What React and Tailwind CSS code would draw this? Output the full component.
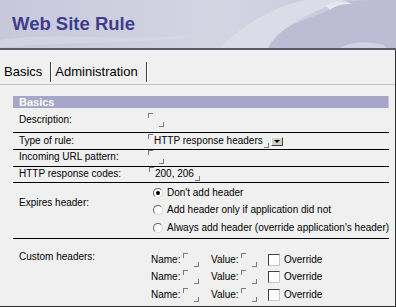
import React from 'react';

const TL = () => <span className="block w-[5px] h-[5px] border-l border-t border-[#7a7a7a] self-start" />;
const BR = () => <span className="block w-[5px] h-[5px] border-r border-b border-[#7a7a7a] self-end" />;

const Field = ({ children, className = '' }) => (
  <span className={`flex h-[14px] ${className}`}>
    <TL />
    {children ? <span className="self-center leading-[12px] px-[1px]">{children}</span> : <span className="w-[6px]" />}
    <BR />
  </span>
);

const Radio = ({ checked }) => (
  <span className="relative block w-[10px] h-[10px] rounded-full bg-white border border-t-[#606060] border-l-[#606060] border-b-[#d8d8d8] border-r-[#d8d8d8] shrink-0">
    {checked && <span className="absolute left-[2px] top-[2px] w-[4px] h-[4px] rounded-full bg-black" />}
  </span>
);

const Checkbox = () => (
  <span className="block w-[12px] h-[12px] bg-white border border-t-[#404040] border-l-[#404040] border-b-[#c8c8c8] border-r-[#c8c8c8] shrink-0" />
);

const Row = ({ label, children, className = '', labelClass = '' }) => (
  <div className={`flex border-b border-black ${className}`}>
    <div className={`w-[135px] pl-[6px] shrink-0 ${labelClass}`}>{label}</div>
    <div className="flex-1">{children}</div>
  </div>
);

const HeaderArt = () => (
  <svg className="absolute inset-0" width="396" height="48" viewBox="0 0 396 48">
    <defs>
      <linearGradient id="hg" x1="0" y1="0" x2="1" y2="0">
        <stop offset="0" stopColor="#c8c8db" />
        <stop offset="0.55" stopColor="#d4d4e3" />
        <stop offset="1" stopColor="#c6c6da" />
      </linearGradient>
    </defs>
    <rect width="396" height="48" fill="url(#hg)" />
    <path d="M0,40 C60,30 120,44 200,34 C150,46 70,40 0,48 Z" fill="#d8d8e6" opacity="0.6" />
    <path d="M220,48 C240,28 268,8 305,0 L345,0 C308,12 280,28 268,48 Z" fill="#dcdce8" />
    <path d="M268,48 C274,36 286,26 304,20 C318,15 330,10 338,4 C346,0 370,0 396,0 L396,48 Z" fill="#bcbcd4" />
    <path d="M326,6 C333,1 345,0 352,4 C344,4 336,5 330,10 Z" fill="#e8e8f1" />
    <path d="M340,48 C348,42 366,40 384,45 L386,48 Z" fill="#d2d2e2" />
  </svg>
);

export default function App() {
  return (
    <div className="w-[396px] h-[307px] bg-[#f0f0f0] font-['Liberation_Sans',Arial,sans-serif] text-black overflow-hidden flex flex-col whitespace-nowrap">
      <div className="relative h-[50px] shrink-0 border-b-2 border-[#5a5a66]">
        <HeaderArt />
        <div className="relative pl-[12px] h-[48px] flex items-center text-[18.5px] font-bold text-[#3d3d8e]">
          Web Site Rule
        </div>
      </div>

      <div className="flex-1 flex flex-col border-r border-b border-[#303030]">
        <div className="h-[35px] shrink-0 flex items-end pb-[2px] border-b border-[#c4c4c4] text-[13px]">
          <div className="h-[20px] flex items-center pl-[4px] pr-[8px] border-r border-[#404040] shadow-[1px_0_0_#ffffff]">
            Basics
          </div>
          <div className="h-[20px] flex items-center pl-[4px] pr-[8px] border-r border-[#404040] shadow-[1px_0_0_#ffffff]">
            Administration
          </div>
        </div>

        <div className="flex-1 flex flex-col pl-[13px] pr-[6px] pt-[11px] text-[10px] leading-[12px]">
          <div className="h-[12px] shrink-0 bg-[#a6a6c8] border-r border-[#c4c4dc] pl-[6px] text-white font-bold text-[11px] leading-[12px]">
            Basics
          </div>

          <Row label="Description:" className="h-[25px] items-center">
            <Field />
          </Row>

          <Row label="Type of rule:" className="h-[17px] items-center">
            <div className="flex items-center">
              <Field>HTTP response headers</Field>
              <span className="ml-[2px] w-[12px] h-[9px] bg-[#d4d0c8] border border-t-[#ffffff] border-l-[#ffffff] border-b-[#404040] border-r-[#404040] flex items-center justify-center">
                <span className="w-0 h-0 border-l-[3px] border-r-[3px] border-t-[3px] border-l-transparent border-r-transparent border-t-black" />
              </span>
            </div>
          </Row>

          <Row label="Incoming URL pattern:" className="h-[17px] items-center pb-[2px]">
            <Field />
          </Row>

          <Row label="HTTP response codes:" className="h-[16px] items-center pb-[2px]">
            <Field className="pl-[1px]">200, 206</Field>
          </Row>

          <Row label="Expires header:" className="h-[56px] border-[#303030]" labelClass="pt-[14px]">
            <div className="flex flex-col pt-[1px] pl-[5px]">
              <div className="h-[17.5px] flex items-center gap-[4px]">
                <Radio checked />
                <span>Don't add header</span>
              </div>
              <div className="h-[17.5px] flex items-center gap-[4px]">
                <Radio />
                <span>Add header only if application did not</span>
              </div>
              <div className="h-[17.5px] flex items-center gap-[4px]">
                <Radio />
                <span>Always add header (override application's header)</span>
              </div>
            </div>
          </Row>

          <div className="flex-1 flex">
            <div className="w-[135px] pl-[6px] pt-[12px] shrink-0">Custom headers:</div>
            <div className="flex flex-col pt-[12px] pl-[3px]">
              {[0, 1, 2].map((i) => (
                <div key={i} className="h-[17.5px] flex items-center">
                  <div className="w-[60px] flex items-center">
                    <span className="w-[32px]">Name:</span>
                    <Field />
                  </div>
                  <div className="w-[57px] flex items-center">
                    <span className="w-[30px]">Value:</span>
                    <Field />
                  </div>
                  <Checkbox />
                  <span className="ml-[4px]">Override</span>
                </div>
              ))}
            </div>
          </div>
        </div>
      </div>
    </div>
  );
}
